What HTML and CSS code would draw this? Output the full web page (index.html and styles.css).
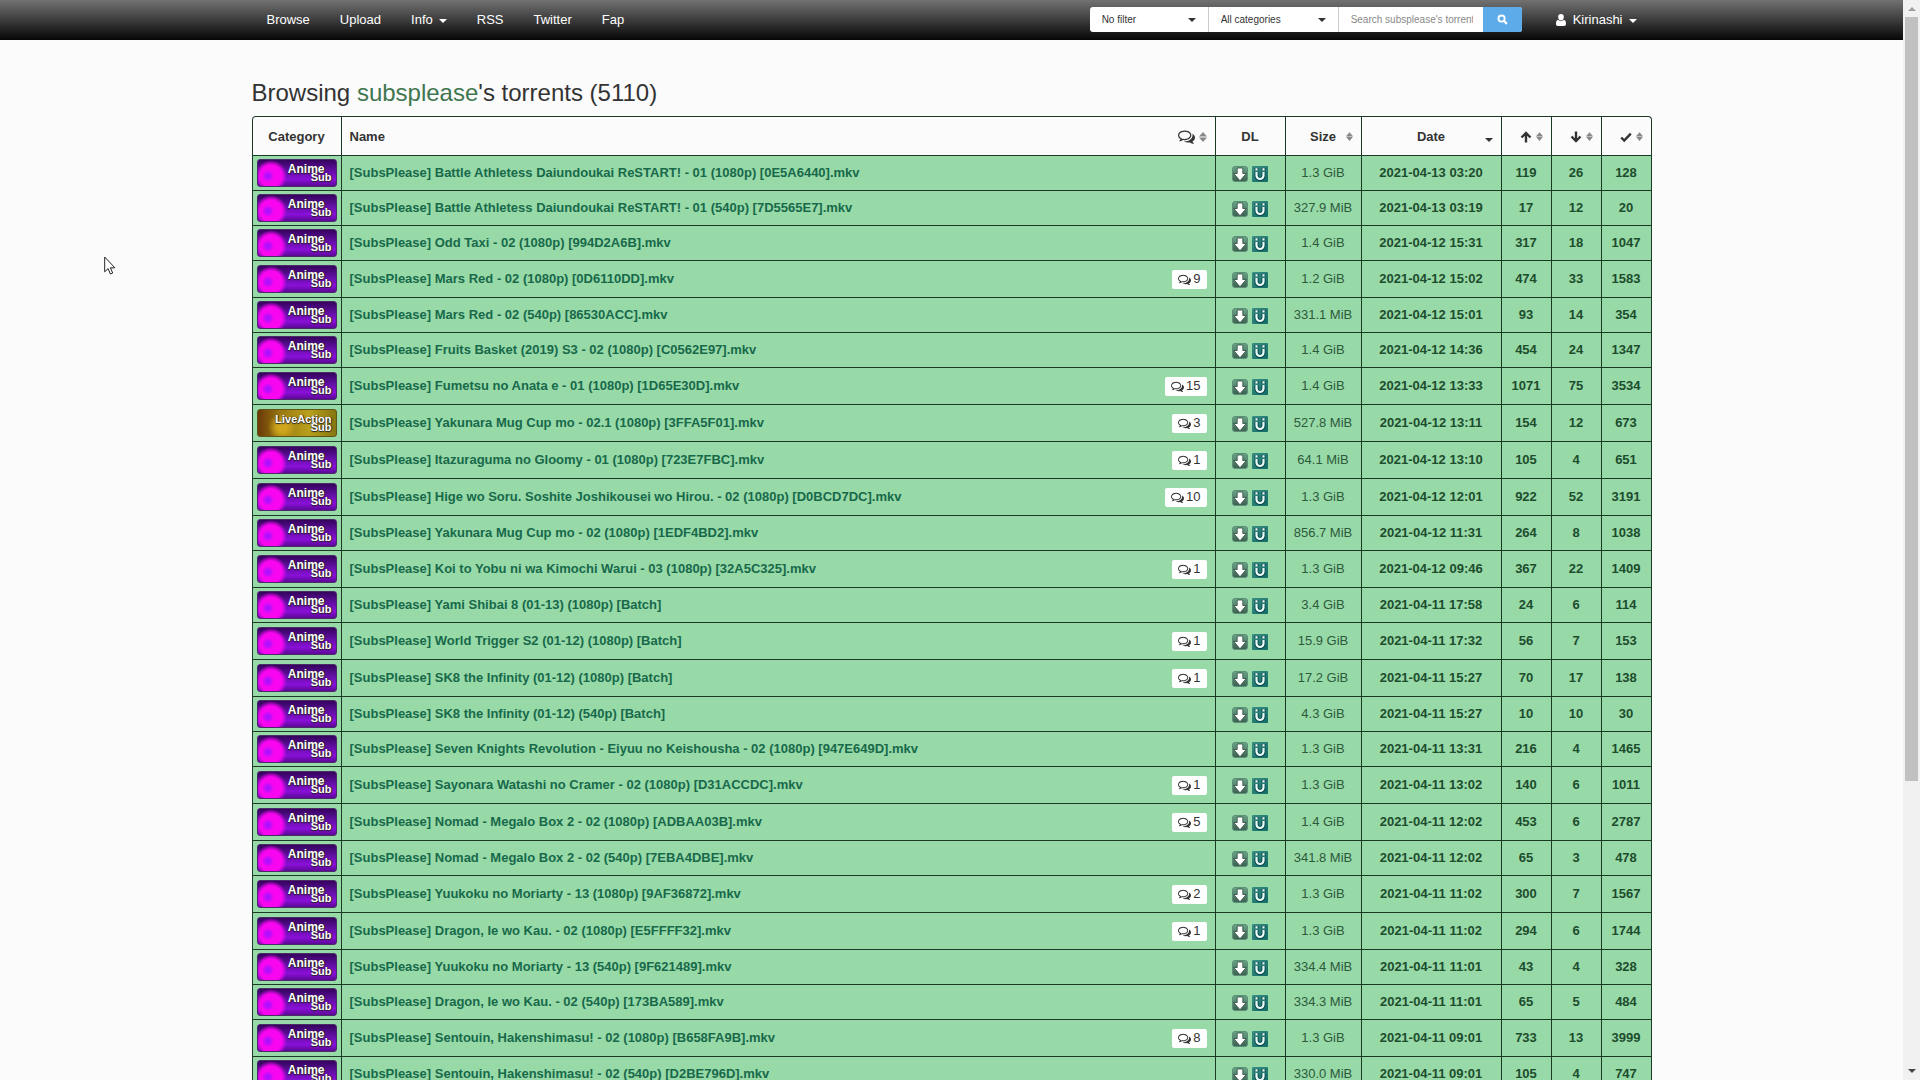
FILE: index.html
```html
<!DOCTYPE html>
<html lang="en">
<head>
<meta charset="utf-8">
<title>Browsing subsplease's torrents</title>
<link rel="stylesheet" href="styles.css">
</head>
<body>
<svg class="defs" aria-hidden="true">
  <defs>
    <linearGradient id="dl-bg" x1="0" y1="0" x2="0" y2="1"><stop offset="0" stop-color="#6aa588"/><stop offset="1" stop-color="#3c5f50"/></linearGradient>
    <linearGradient id="mg-bg" x1="0" y1="0" x2="1" y2="1"><stop offset="0" stop-color="#3a8f84"/><stop offset="1" stop-color="#0f6a66"/></linearGradient>
  </defs>
  <symbol id="comments" viewBox="0 0 1792 1792"><path d="M704 384q-153 0-286 52t-211.500 141-78.500 191q0 82 53 158t149 132l97 56-35 84q34-20 62-39l44-31 53 10q78 14 153 14 153 0 286-52t211.500-141 78.500-191-78.500-191-211.500-141-286-52zm0-128q191 0 353.500 68.500t256.500 186.500 94 257-94 257-256.500 186.500-353.500 68.500q-86 0-176-16-124 88-278 128-36 9-86 16h-3q-11 0-20.500-8t-11.500-21q-1-3-1-6.500t.5-6.500 2-6l2.500-5 3.500-5.500 4-5 4.500-5 4-4.500q5-6 23-25t26-29.500 22.500-29 25-38.500 20.500-44q-124-72-195-177t-71-224q0-139 94-257t256.500-186.500 353.500-68.500zm822 1169q10 24 20.500 44t25 38.500 22.500 29 26 29.500 23 25q1 1 4 4.500t4.500 5 4 5 3.500 5.500l2.500 5 2 6 .5 6.500-1 6.500q-3 14-13 22t-22 7q-50-7-86-16-154-40-278-128-90 16-176 16-271 0-472-132 58 4 88 4 161 0 309-45t264-129q125-92 192-212t67-254q0-77-23-152 129 71 204 178t75 230q0 120-71 224.500t-195 176.500z"/></symbol>
  <symbol id="download" viewBox="0 0 16 16"><rect x="0.500" y="0.500" width="15" height="15" rx="2.500" fill="url(#dl-bg)" stroke="#5b8f78"/><path d="M5.200 2h5.600v5.500h3.400L8 14.800 1.800 7.500h3.400z" fill="#fff" stroke="#2d4a3d" stroke-width=".8"/></symbol>
  <symbol id="magnet" viewBox="0 0 16 16"><rect width="16" height="16" rx="1" fill="url(#mg-bg)"/><path d="M4.500 6v3.500a3.500 3.500 0 0 0 7 0V6M4.500 2v2.500M11.500 2v2.500" fill="none" stroke="#0b4448" stroke-width="4"/><path d="M4.500 6v3.500a3.500 3.500 0 0 0 7 0V6M4.500 2.200v2.200M11.500 2.200v2.200" fill="none" stroke="#eafcf8" stroke-width="2.200"/></symbol>
  <symbol id="sort" viewBox="0 0 8 10"><path d="M4 0l4 4.600H0zM4 10l4-4.600H0z"/></symbol>
  <symbol id="caret" viewBox="0 0 8 4"><path d="M0 0h8L4 4z"/></symbol>
  <symbol id="arrow-up" viewBox="0 0 12 12"><path d="M6 11.500V2M1.500 6.500L6 2l4.500 4.500" fill="none" stroke="currentColor" stroke-width="2.400"/></symbol>
  <symbol id="arrow-down" viewBox="0 0 12 12"><path d="M6 .5V10M1.500 5.500L6 10l4.500-4.500" fill="none" stroke="currentColor" stroke-width="2.400"/></symbol>
  <symbol id="check" viewBox="0 0 12 12"><path d="M1.200 6.500l3 3 6.600-6.800" fill="none" stroke="currentColor" stroke-width="2.400"/></symbol>
</svg>
<div class="screen">
  <div class="page">
    <nav class="navbar">
      <div class="container bar">
        <div class="links">
          <a href="#">Browse</a>
          <a href="#">Upload</a>
          <a href="#">Info <svg class="caret"><use href="#caret"/></svg></a>
          <a href="#">RSS</a>
          <a href="#">Twitter</a>
          <a href="#">Fap</a>
        </div>
        <form class="search">
          <label class="pick filter"><select aria-label="Filter"><option>No filter</option></select><svg class="caret"><use href="#caret"/></svg></label>
          <label class="pick category"><select aria-label="Category"><option>All categories</option></select><svg class="caret"><use href="#caret"/></svg></label>
          <input type="text" aria-label="Search" placeholder="Search subsplease's torrents...">
          <button type="button" aria-label="Search"><svg viewBox="0 0 12 12"><circle cx="5" cy="5" r="3.400" fill="none" stroke="#fff" stroke-width="2"/><path d="M7.500 7.500l3.300 3.300" stroke="#fff" stroke-width="2.400"/></svg></button>
        </form>
        <a class="user" href="#"><svg class="person" viewBox="0 0 10 12"><path d="M5 0a2.800 3 0 0 1 2.800 3.200C7.800 5 6.600 6.400 5 6.400S2.200 5 2.200 3.200A2.800 3 0 0 1 5 0zM2.200 5.800C3 6.700 4 7.200 5 7.200s2-.5 2.800-1.400C9.400 6.200 10 7.600 10 10c0 1.200-.8 2-1.800 2H1.800C.8 12 0 11.200 0 10c0-2.400.6-3.800 2.200-4.200z"/></svg>Kirinashi <svg class="caret"><use href="#caret"/></svg></a>
      </div>
    </nav>
    <main class="container">
      <h3>Browsing <span>subsplease</span>'s torrents (5110)</h3>
      <table>
        <colgroup><col class="c-cat"><col><col class="c-dl"><col class="c-size"><col class="c-date"><col class="c-num"><col class="c-num"><col class="c-num"></colgroup>
        <thead>
          <tr>
            <th>Category</th>
            <th><div class="split">Name<span class="talk"><svg class="big"><use href="#comments"/></svg><svg class="sort"><use href="#sort"/></svg></span></div></th>
            <th>DL</th>
            <th><div class="head"><span>Size</span><svg class="sort"><use href="#sort"/></svg></div></th>
            <th><div class="head"><span>Date</span><svg class="caret sorted"><use href="#caret"/></svg></div></th>
            <th><div class="head"><svg class="mark"><use href="#arrow-up"/></svg><svg class="sort"><use href="#sort"/></svg></div></th>
            <th><div class="head"><svg class="mark"><use href="#arrow-down"/></svg><svg class="sort"><use href="#sort"/></svg></div></th>
            <th><div class="head"><svg class="mark"><use href="#check"/></svg><svg class="sort"><use href="#sort"/></svg></div></th>
          </tr>
        </thead>
        <tbody>
          <tr><td><a class="cat" href="#"><span>Anime</span><span>Sub</span></a></td><td><div class="split"><a href="#">[SubsPlease] Battle Athletess Daiundoukai ReSTART! - 01 (1080p) [0E5A6440].mkv</a></div></td><td><div class="dl"><a href="#" aria-label="Download"><svg><use href="#download"/></svg></a><a href="#" aria-label="Magnet"><svg><use href="#magnet"/></svg></a></div></td><td class="size">1.3 GiB</td><td>2021-04-13 03:20</td><td>119</td><td>26</td><td>128</td></tr>
          <tr><td><a class="cat" href="#"><span>Anime</span><span>Sub</span></a></td><td><div class="split"><a href="#">[SubsPlease] Battle Athletess Daiundoukai ReSTART! - 01 (540p) [7D5565E7].mkv</a></div></td><td><div class="dl"><a href="#" aria-label="Download"><svg><use href="#download"/></svg></a><a href="#" aria-label="Magnet"><svg><use href="#magnet"/></svg></a></div></td><td class="size">327.9 MiB</td><td>2021-04-13 03:19</td><td>17</td><td>12</td><td>20</td></tr>
          <tr><td><a class="cat" href="#"><span>Anime</span><span>Sub</span></a></td><td><div class="split"><a href="#">[SubsPlease] Odd Taxi - 02 (1080p) [994D2A6B].mkv</a></div></td><td><div class="dl"><a href="#" aria-label="Download"><svg><use href="#download"/></svg></a><a href="#" aria-label="Magnet"><svg><use href="#magnet"/></svg></a></div></td><td class="size">1.4 GiB</td><td>2021-04-12 15:31</td><td>317</td><td>18</td><td>1047</td></tr>
          <tr class="talked"><td><a class="cat" href="#"><span>Anime</span><span>Sub</span></a></td><td><div class="split"><a href="#">[SubsPlease] Mars Red - 02 (1080p) [0D6110DD].mkv</a><a class="count" href="#"><svg><use href="#comments"/></svg>9</a></div></td><td><div class="dl"><a href="#" aria-label="Download"><svg><use href="#download"/></svg></a><a href="#" aria-label="Magnet"><svg><use href="#magnet"/></svg></a></div></td><td class="size">1.2 GiB</td><td>2021-04-12 15:02</td><td>474</td><td>33</td><td>1583</td></tr>
          <tr><td><a class="cat" href="#"><span>Anime</span><span>Sub</span></a></td><td><div class="split"><a href="#">[SubsPlease] Mars Red - 02 (540p) [86530ACC].mkv</a></div></td><td><div class="dl"><a href="#" aria-label="Download"><svg><use href="#download"/></svg></a><a href="#" aria-label="Magnet"><svg><use href="#magnet"/></svg></a></div></td><td class="size">331.1 MiB</td><td>2021-04-12 15:01</td><td>93</td><td>14</td><td>354</td></tr>
          <tr><td><a class="cat" href="#"><span>Anime</span><span>Sub</span></a></td><td><div class="split"><a href="#">[SubsPlease] Fruits Basket (2019) S3 - 02 (1080p) [C0562E97].mkv</a></div></td><td><div class="dl"><a href="#" aria-label="Download"><svg><use href="#download"/></svg></a><a href="#" aria-label="Magnet"><svg><use href="#magnet"/></svg></a></div></td><td class="size">1.4 GiB</td><td>2021-04-12 14:36</td><td>454</td><td>24</td><td>1347</td></tr>
          <tr class="talked"><td><a class="cat" href="#"><span>Anime</span><span>Sub</span></a></td><td><div class="split"><a href="#">[SubsPlease] Fumetsu no Anata e - 01 (1080p) [1D65E30D].mkv</a><a class="count" href="#"><svg><use href="#comments"/></svg>15</a></div></td><td><div class="dl"><a href="#" aria-label="Download"><svg><use href="#download"/></svg></a><a href="#" aria-label="Magnet"><svg><use href="#magnet"/></svg></a></div></td><td class="size">1.4 GiB</td><td>2021-04-12 13:33</td><td>1071</td><td>75</td><td>3534</td></tr>
          <tr class="talked"><td><a class="cat live" href="#"><span>LiveAction</span><span>Sub</span></a></td><td><div class="split"><a href="#">[SubsPlease] Yakunara Mug Cup mo - 02.1 (1080p) [3FFA5F01].mkv</a><a class="count" href="#"><svg><use href="#comments"/></svg>3</a></div></td><td><div class="dl"><a href="#" aria-label="Download"><svg><use href="#download"/></svg></a><a href="#" aria-label="Magnet"><svg><use href="#magnet"/></svg></a></div></td><td class="size">527.8 MiB</td><td>2021-04-12 13:11</td><td>154</td><td>12</td><td>673</td></tr>
          <tr class="talked"><td><a class="cat" href="#"><span>Anime</span><span>Sub</span></a></td><td><div class="split"><a href="#">[SubsPlease] Itazuraguma no Gloomy - 01 (1080p) [723E7FBC].mkv</a><a class="count" href="#"><svg><use href="#comments"/></svg>1</a></div></td><td><div class="dl"><a href="#" aria-label="Download"><svg><use href="#download"/></svg></a><a href="#" aria-label="Magnet"><svg><use href="#magnet"/></svg></a></div></td><td class="size">64.1 MiB</td><td>2021-04-12 13:10</td><td>105</td><td>4</td><td>651</td></tr>
          <tr class="talked"><td><a class="cat" href="#"><span>Anime</span><span>Sub</span></a></td><td><div class="split"><a href="#">[SubsPlease] Hige wo Soru. Soshite Joshikousei wo Hirou. - 02 (1080p) [D0BCD7DC].mkv</a><a class="count" href="#"><svg><use href="#comments"/></svg>10</a></div></td><td><div class="dl"><a href="#" aria-label="Download"><svg><use href="#download"/></svg></a><a href="#" aria-label="Magnet"><svg><use href="#magnet"/></svg></a></div></td><td class="size">1.3 GiB</td><td>2021-04-12 12:01</td><td>922</td><td>52</td><td>3191</td></tr>
          <tr><td><a class="cat" href="#"><span>Anime</span><span>Sub</span></a></td><td><div class="split"><a href="#">[SubsPlease] Yakunara Mug Cup mo - 02 (1080p) [1EDF4BD2].mkv</a></div></td><td><div class="dl"><a href="#" aria-label="Download"><svg><use href="#download"/></svg></a><a href="#" aria-label="Magnet"><svg><use href="#magnet"/></svg></a></div></td><td class="size">856.7 MiB</td><td>2021-04-12 11:31</td><td>264</td><td>8</td><td>1038</td></tr>
          <tr class="talked"><td><a class="cat" href="#"><span>Anime</span><span>Sub</span></a></td><td><div class="split"><a href="#">[SubsPlease] Koi to Yobu ni wa Kimochi Warui - 03 (1080p) [32A5C325].mkv</a><a class="count" href="#"><svg><use href="#comments"/></svg>1</a></div></td><td><div class="dl"><a href="#" aria-label="Download"><svg><use href="#download"/></svg></a><a href="#" aria-label="Magnet"><svg><use href="#magnet"/></svg></a></div></td><td class="size">1.3 GiB</td><td>2021-04-12 09:46</td><td>367</td><td>22</td><td>1409</td></tr>
          <tr><td><a class="cat" href="#"><span>Anime</span><span>Sub</span></a></td><td><div class="split"><a href="#">[SubsPlease] Yami Shibai 8 (01-13) (1080p) [Batch]</a></div></td><td><div class="dl"><a href="#" aria-label="Download"><svg><use href="#download"/></svg></a><a href="#" aria-label="Magnet"><svg><use href="#magnet"/></svg></a></div></td><td class="size">3.4 GiB</td><td>2021-04-11 17:58</td><td>24</td><td>6</td><td>114</td></tr>
          <tr class="talked"><td><a class="cat" href="#"><span>Anime</span><span>Sub</span></a></td><td><div class="split"><a href="#">[SubsPlease] World Trigger S2 (01-12) (1080p) [Batch]</a><a class="count" href="#"><svg><use href="#comments"/></svg>1</a></div></td><td><div class="dl"><a href="#" aria-label="Download"><svg><use href="#download"/></svg></a><a href="#" aria-label="Magnet"><svg><use href="#magnet"/></svg></a></div></td><td class="size">15.9 GiB</td><td>2021-04-11 17:32</td><td>56</td><td>7</td><td>153</td></tr>
          <tr class="talked"><td><a class="cat" href="#"><span>Anime</span><span>Sub</span></a></td><td><div class="split"><a href="#">[SubsPlease] SK8 the Infinity (01-12) (1080p) [Batch]</a><a class="count" href="#"><svg><use href="#comments"/></svg>1</a></div></td><td><div class="dl"><a href="#" aria-label="Download"><svg><use href="#download"/></svg></a><a href="#" aria-label="Magnet"><svg><use href="#magnet"/></svg></a></div></td><td class="size">17.2 GiB</td><td>2021-04-11 15:27</td><td>70</td><td>17</td><td>138</td></tr>
          <tr><td><a class="cat" href="#"><span>Anime</span><span>Sub</span></a></td><td><div class="split"><a href="#">[SubsPlease] SK8 the Infinity (01-12) (540p) [Batch]</a></div></td><td><div class="dl"><a href="#" aria-label="Download"><svg><use href="#download"/></svg></a><a href="#" aria-label="Magnet"><svg><use href="#magnet"/></svg></a></div></td><td class="size">4.3 GiB</td><td>2021-04-11 15:27</td><td>10</td><td>10</td><td>30</td></tr>
          <tr><td><a class="cat" href="#"><span>Anime</span><span>Sub</span></a></td><td><div class="split"><a href="#">[SubsPlease] Seven Knights Revolution - Eiyuu no Keishousha - 02 (1080p) [947E649D].mkv</a></div></td><td><div class="dl"><a href="#" aria-label="Download"><svg><use href="#download"/></svg></a><a href="#" aria-label="Magnet"><svg><use href="#magnet"/></svg></a></div></td><td class="size">1.3 GiB</td><td>2021-04-11 13:31</td><td>216</td><td>4</td><td>1465</td></tr>
          <tr class="talked"><td><a class="cat" href="#"><span>Anime</span><span>Sub</span></a></td><td><div class="split"><a href="#">[SubsPlease] Sayonara Watashi no Cramer - 02 (1080p) [D31ACCDC].mkv</a><a class="count" href="#"><svg><use href="#comments"/></svg>1</a></div></td><td><div class="dl"><a href="#" aria-label="Download"><svg><use href="#download"/></svg></a><a href="#" aria-label="Magnet"><svg><use href="#magnet"/></svg></a></div></td><td class="size">1.3 GiB</td><td>2021-04-11 13:02</td><td>140</td><td>6</td><td>1011</td></tr>
          <tr class="talked"><td><a class="cat" href="#"><span>Anime</span><span>Sub</span></a></td><td><div class="split"><a href="#">[SubsPlease] Nomad - Megalo Box 2 - 02 (1080p) [ADBAA03B].mkv</a><a class="count" href="#"><svg><use href="#comments"/></svg>5</a></div></td><td><div class="dl"><a href="#" aria-label="Download"><svg><use href="#download"/></svg></a><a href="#" aria-label="Magnet"><svg><use href="#magnet"/></svg></a></div></td><td class="size">1.4 GiB</td><td>2021-04-11 12:02</td><td>453</td><td>6</td><td>2787</td></tr>
          <tr><td><a class="cat" href="#"><span>Anime</span><span>Sub</span></a></td><td><div class="split"><a href="#">[SubsPlease] Nomad - Megalo Box 2 - 02 (540p) [7EBA4DBE].mkv</a></div></td><td><div class="dl"><a href="#" aria-label="Download"><svg><use href="#download"/></svg></a><a href="#" aria-label="Magnet"><svg><use href="#magnet"/></svg></a></div></td><td class="size">341.8 MiB</td><td>2021-04-11 12:02</td><td>65</td><td>3</td><td>478</td></tr>
          <tr class="talked"><td><a class="cat" href="#"><span>Anime</span><span>Sub</span></a></td><td><div class="split"><a href="#">[SubsPlease] Yuukoku no Moriarty - 13 (1080p) [9AF36872].mkv</a><a class="count" href="#"><svg><use href="#comments"/></svg>2</a></div></td><td><div class="dl"><a href="#" aria-label="Download"><svg><use href="#download"/></svg></a><a href="#" aria-label="Magnet"><svg><use href="#magnet"/></svg></a></div></td><td class="size">1.3 GiB</td><td>2021-04-11 11:02</td><td>300</td><td>7</td><td>1567</td></tr>
          <tr class="talked"><td><a class="cat" href="#"><span>Anime</span><span>Sub</span></a></td><td><div class="split"><a href="#">[SubsPlease] Dragon, Ie wo Kau. - 02 (1080p) [E5FFFF32].mkv</a><a class="count" href="#"><svg><use href="#comments"/></svg>1</a></div></td><td><div class="dl"><a href="#" aria-label="Download"><svg><use href="#download"/></svg></a><a href="#" aria-label="Magnet"><svg><use href="#magnet"/></svg></a></div></td><td class="size">1.3 GiB</td><td>2021-04-11 11:02</td><td>294</td><td>6</td><td>1744</td></tr>
          <tr><td><a class="cat" href="#"><span>Anime</span><span>Sub</span></a></td><td><div class="split"><a href="#">[SubsPlease] Yuukoku no Moriarty - 13 (540p) [9F621489].mkv</a></div></td><td><div class="dl"><a href="#" aria-label="Download"><svg><use href="#download"/></svg></a><a href="#" aria-label="Magnet"><svg><use href="#magnet"/></svg></a></div></td><td class="size">334.4 MiB</td><td>2021-04-11 11:01</td><td>43</td><td>4</td><td>328</td></tr>
          <tr><td><a class="cat" href="#"><span>Anime</span><span>Sub</span></a></td><td><div class="split"><a href="#">[SubsPlease] Dragon, Ie wo Kau. - 02 (540p) [173BA589].mkv</a></div></td><td><div class="dl"><a href="#" aria-label="Download"><svg><use href="#download"/></svg></a><a href="#" aria-label="Magnet"><svg><use href="#magnet"/></svg></a></div></td><td class="size">334.3 MiB</td><td>2021-04-11 11:01</td><td>65</td><td>5</td><td>484</td></tr>
          <tr class="talked"><td><a class="cat" href="#"><span>Anime</span><span>Sub</span></a></td><td><div class="split"><a href="#">[SubsPlease] Sentouin, Hakenshimasu! - 02 (1080p) [B658FA9B].mkv</a><a class="count" href="#"><svg><use href="#comments"/></svg>8</a></div></td><td><div class="dl"><a href="#" aria-label="Download"><svg><use href="#download"/></svg></a><a href="#" aria-label="Magnet"><svg><use href="#magnet"/></svg></a></div></td><td class="size">1.3 GiB</td><td>2021-04-11 09:01</td><td>733</td><td>13</td><td>3999</td></tr>
          <tr><td><a class="cat" href="#"><span>Anime</span><span>Sub</span></a></td><td><div class="split"><a href="#">[SubsPlease] Sentouin, Hakenshimasu! - 02 (540p) [D2BE796D].mkv</a></div></td><td><div class="dl"><a href="#" aria-label="Download"><svg><use href="#download"/></svg></a><a href="#" aria-label="Magnet"><svg><use href="#magnet"/></svg></a></div></td><td class="size">330.0 MiB</td><td>2021-04-11 09:01</td><td>105</td><td>4</td><td>747</td></tr>
        </tbody>
      </table>
    </main>
  </div>
  <div class="scrollbar" aria-hidden="true">
    <svg class="up" viewBox="0 0 8 4"><path d="M0 4h8L4 0z"/></svg>
    <div class="track"><div class="thumb"></div></div>
    <svg class="down" viewBox="0 0 8 4"><path d="M0 0h8L4 4z"/></svg>
  </div>
</div>
<svg class="pointer" viewBox="0 0 12 19" aria-hidden="true"><path d="M.7 1v14.800l3.400-3.200 2.300 5.400 2.300-1-2.300-5.200h4.500z" fill="#fff" stroke="#222"/></svg>
</body>
</html>
```
FILE: styles.css
```css
* { box-sizing: border-box; }

body {
  margin: 0;
  background: #fbfbfb;
  color: #333;
  font: 13px/20px "Liberation Sans", Arial, sans-serif;
}

a { color: inherit; text-decoration: none; }
svg { display: block; fill: currentColor; flex: none; }
.defs { position: absolute; width: 0; height: 0; }

.screen { display: flex; height: 100vh; overflow: hidden; }
.page { flex: 1; min-width: 0; overflow: hidden; }
.container { width: 100%; max-width: 1400px; margin: 0 auto; }

/* top bar */
.navbar { background: linear-gradient(#727272, #3c3c3c 50%, #060606); color: #fff; }
.bar { display: flex; align-items: center; height: 40px; padding-bottom: 1px; }
.links { display: flex; flex: 1; }
.links a, .user { display: flex; align-items: center; padding: 0 15px; }
.caret { width: 8px; height: 4px; }
.links .caret, .user .caret { margin: 2px 0 0 6px; }
.user { padding-left: 34px; }
.person { width: 10px; height: 12px; margin-right: 7px; }

.search {
  display: flex;
  width: 432px;
  height: 25px;
  overflow: hidden;
  border-radius: 3px;
  background: #fff;
  color: #333;
}
.pick { display: grid; align-items: center; border-right: 1px solid #ccc; }
.pick > * { grid-area: 1 / 1; }
.pick .caret { justify-self: end; margin-right: 12px; pointer-events: none; }
.filter { width: 119px; }
.category { width: 130px; }
.search select, .search input {
  appearance: none;
  min-width: 0;
  height: 25px;
  border: 0;
  padding: 0 12px;
  background: none;
  color: #333;
  font: 10px "Liberation Sans", Arial, sans-serif;
}
.search input { flex: 1; padding: 0 10px 0 12px; }
.search input::placeholder { color: #888; }
.search button {
  display: grid;
  place-items: center;
  width: 39px;
  border: 0;
  padding: 0;
  background: #5dabe8;
}
.search button svg { width: 11px; height: 11px; }

/* listing */
h3 { margin: 39px 0 9px; font-size: 24px; font-weight: 400; line-height: 28px; }
h3 span { color: #3f7650; }

table {
  width: 100%;
  table-layout: fixed;
  border-collapse: separate;
  border-spacing: 0;
  border: solid #1a3a25;
  border-width: 1px 1px 0 0;
  border-radius: 4px;
}
.c-cat { width: 89px; }
.c-dl { width: 70px; }
.c-size { width: 76px; }
.c-date { width: 140px; }
.c-num { width: 50px; }

th, td { padding: 0 8px; border-left: 1px solid #1a3a25; text-align: center; font-weight: 700; }
th { height: 38px; padding-top: 2px; }
th:first-child { border-top-left-radius: 3px; }
td { height: 35px; border-top: 1px solid #1a3a25; background: #98d9a8; color: #1c4d2d; }
td:first-child { padding: 0 4px; }
.talked td { height: 37px; }
td.size { padding: 0; font-weight: 400; color: #2c5a3b; }
td:nth-child(n+5) { padding: 0 7px; }

.split { display: flex; align-items: center; justify-content: space-between; }
td .split { color: #17694a; }
.talk { display: flex; align-items: center; gap: 4px; }
.big { width: 17px; height: 17px; margin-bottom: 2px; }
.sort { width: 8px; height: 10px; color: #888; }
.head { display: grid; grid-template-columns: 1fr auto 1fr; align-items: center; }
.head > :first-child { grid-column: 2; }
.head > :last-child { justify-self: end; }
.head .sort { width: 7px; height: 9px; margin-bottom: 2px; }
.mark { width: 12px; height: 12px; }
.caret.sorted { margin-top: 5px; }

.count {
  display: flex;
  align-items: center;
  gap: 2px;
  height: 19px;
  padding: 0 6px;
  border-radius: 2px;
  background: #fff;
  color: #333;
  font-weight: 400;
}
.count svg { width: 13px; height: 13px; }

.dl { display: flex; justify-content: center; gap: 4px; padding-top: 2px; }
.dl svg { width: 16px; height: 16px; }

/* category badges */
.cat {
  display: flex;
  flex-direction: column;
  align-items: flex-end;
  height: 28px;
  padding: 5px 4px 0 0;
  border: 1px solid #4b2a6a;
  border-radius: 3px;
  background:
    radial-gradient(circle at 10px 16px, #b010ff 0 2px, transparent 6px),
    radial-gradient(circle at 13px 16px, #f806f0 0 11px, transparent 16px),
    linear-gradient(#35035c, #5f0fa0 40%, #8a0fd8 75%, #5a0a94);
  color: #fff;
  font-size: 11px;
  line-height: 8px;
  text-shadow: 0 1px 1px #222, 1px 0 1px #222;
}
.cat span:first-child { margin-right: 7px; font-size: 12px; }
.cat.live {
  border-color: #5e5418;
  background:
    radial-gradient(circle at 24px 17px, #cfa51c 0 5px, transparent 14px),
    linear-gradient(90deg, #6b3a08, #9a7a10 30%, #b8a01c 65%, #857610);
}
.cat.live span:first-child { margin-right: 0; font-size: 11px; }

/* window scrollbar */
.scrollbar {
  display: flex;
  flex-direction: column;
  align-items: center;
  width: 17px;
  padding: 7px 0;
  background: #f1f1f1;
}
.scrollbar svg { width: 8px; height: 4px; }
.up { color: #a0a0a0; }
.down { color: #444; }
.track { flex: 1; width: 13px; padding: 6px 0; }
.thumb { height: 73%; background: #c1c1c1; }

.pointer { position: absolute; left: 104px; top: 256px; width: 12px; height: 19px; }
```
